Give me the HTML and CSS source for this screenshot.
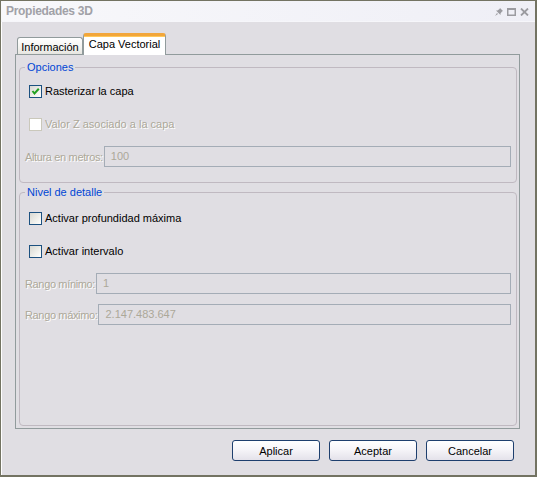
FILE: index.html
```html
<!DOCTYPE html>
<html lang="es">
<head>
<meta charset="utf-8">
<title>Propiedades 3D</title>
<link rel="stylesheet" href="styles.css">
</head>
<body>
<div class="window">
  <div class="titlebar">
    <span class="title">Propiedades 3D</span>
    <div class="title-icons">
      <svg class="ticon" width="8" height="8" viewBox="0 0 8 8"><path d="M5 0 L8 3 L7 3.5 L5.5 5.5 L5.5 7 L1 2.5 L2.5 2.5 L4.5 1 Z M2 5 L0 8 L3 6 Z" fill="#9b9ba0"/></svg>
      <svg class="ticon" width="9" height="8" viewBox="0 0 9 8"><rect x="0.75" y="0.75" width="7.5" height="6.5" fill="none" stroke="#9b9ba0" stroke-width="1.5"/><rect x="0" y="0" width="9" height="2" fill="#9b9ba0"/></svg>
      <svg class="ticon" width="9" height="8" viewBox="0 0 9 8"><path d="M1 0.5 L8 7.5 M8 0.5 L1 7.5" stroke="#9b9ba0" stroke-width="1.8"/></svg>
    </div>
  </div>
  <div class="content">
    <div class="tabs">
      <div class="tab">Información</div>
      <div class="tab tab-active">Capa Vectorial</div>
    </div>
    <div class="panel">
      <fieldset class="group group-options">
        <legend>Opciones</legend>
        <div class="check-row">
          <span class="checkbox">
            <svg width="11" height="11" viewBox="0 0 11 11"><path d="M2.5 5 L4.5 7.5 L8.8 2.8" fill="none" stroke="#21a121" stroke-width="2"/></svg>
          </span>
          <span class="check-text">Rasterizar la capa</span>
        </div>
        <div class="check-row row-gap-20 disabled">
          <span class="checkbox checkbox-disabled"></span>
          <span class="check-text">Valor Z asociado a la capa</span>
        </div>
        <div class="field-row row-gap-15">
          <span class="field-label">Altura en metros:</span>
          <span class="field-input">100</span>
        </div>
      </fieldset>
      <fieldset class="group group-detail">
        <legend>Nivel de detalle</legend>
        <div class="check-row">
          <span class="checkbox"></span>
          <span class="check-text">Activar profundidad máxima</span>
        </div>
        <div class="check-row row-gap-20">
          <span class="checkbox"></span>
          <span class="check-text">Activar intervalo</span>
        </div>
        <div class="field-row row-gap-15">
          <span class="field-label">Rango mínimo:</span>
          <span class="field-input">1</span>
        </div>
        <div class="field-row row-gap-10">
          <span class="field-label">Rango máximo:</span>
          <span class="field-input">2.147.483.647</span>
        </div>
      </fieldset>
    </div>
    <div class="footer">
      <button class="btn">Aplicar</button>
      <button class="btn">Aceptar</button>
      <button class="btn">Cancelar</button>
    </div>
  </div>
</div>
</body>
</html>
```
FILE: styles.css
```css
* { box-sizing: border-box; }
html, body { margin: 0; padding: 0; }
body {
  font-family: "Liberation Sans", Arial, sans-serif;
  font-size: 11px;
  color: #000;
  background: #e0dee3;
}
.window {
  width: 537px;
  height: 477px;
  display: flex;
  flex-direction: column;
  background: #e0dee3;
  border-style: solid;
  border-color: #737362;
  border-width: 1px 2px 2px 1px;
  box-shadow: inset 1px 0 #ffffff;
}
.titlebar {
  height: 21px;
  display: flex;
  align-items: center;
  justify-content: space-between;
  padding: 0 6px 0 5px;
  background: linear-gradient(to right, #f8f8fb, #efeff6);
  border-bottom: 1px solid #f6f6fa;
}
.title {
  font-weight: bold;
  font-size: 12px;
  color: #a1a1a7;
  letter-spacing: -0.3px;
}
.title-icons {
  display: flex;
  align-items: center;
  gap: 4px;
  padding-top: 1px;
}
.ticon { display: block; }
.content {
  flex: 1;
  display: flex;
  flex-direction: column;
  padding: 11px 15px 14px 14px;
}
.tabs {
  height: 21px;
  display: flex;
  align-items: flex-end;
  padding-left: 2px;
}
.tab {
  width: 66px;
  height: 17px;
  border: 1px solid #919b9c;
  border-bottom: none;
  border-radius: 3px 3px 0 0;
  background: linear-gradient(to bottom, #ffffff, #f3f3f0 60%, #e6e5e0);
  display: flex;
  align-items: center;
  justify-content: center;
  padding-top: 1px;
}
.tab-active {
  width: 83px;
  height: 22px;
  margin-bottom: -1px;
  position: relative;
  z-index: 1;
  background: #ffffff;
  border-top: 3px solid #f2a63a;
  box-shadow: inset 0 1px 0 #ffc85a;
  padding-top: 0;
  padding-bottom: 3px;
}
.panel {
  flex: 1;
  display: flex;
  flex-direction: column;
  border: 1px solid #919b9c;
  padding: 6px 2px 2px 3px;
  background: #e0dee3;
}
.group {
  margin: 0;
  padding: 11px 5px 15px 5px;
  border: 1px solid #c0b9c1;
  border-radius: 4px;
  display: flex;
  flex-direction: column;
  min-width: 0;
}
.group legend {
  padding: 0 2px;
  margin: 0;
  height: 13px;
  line-height: 13px;
  color: #0046d5;
}
.group-detail {
  margin-top: 3px;
  padding-top: 13px;
  flex: 1;
}
.check-row {
  display: flex;
  align-items: center;
  height: 13px;
  margin-left: 4px;
  line-height: 13px;
}
.row-gap-20 { margin-top: 20px; }
.row-gap-15 { margin-top: 15px; }
.row-gap-10 { margin-top: 10px; }
.checkbox {
  width: 13px;
  height: 13px;
  border: 1px solid #1c5180;
  background: linear-gradient(135deg, #d8d8d2, #f4f4f0 70%, #ffffff);
  display: block;
  flex: none;
}
.checkbox svg { display: block; }
.checkbox-disabled {
  border-color: #cac8bb;
  background: #ffffff;
}
.check-text { margin-left: 3px; }
.disabled .check-text,
.field-label {
  color: #aca899;
  text-shadow: 1px 1px 0 #ffffff;
}
.field-row {
  display: flex;
  align-items: center;
  gap: 1px;
}
.field-label {
  white-space: nowrap;
  letter-spacing: -0.35px;
}
.field-input {
  flex: 1;
  height: 21px;
  border: 1px solid #a4acb6;
  padding-left: 6px;
  line-height: 19px;
  color: #aca899;
}
.footer {
  display: flex;
  justify-content: flex-end;
  gap: 9px;
  padding: 11px 6px 0 0;
}
.btn {
  width: 88px;
  height: 21px;
  border: 1px solid #1e3f6e;
  border-radius: 3px;
  background: linear-gradient(to bottom, #ffffff 0%, #f6f5f9 45%, #e4e2ea 100%);
  font-family: "Liberation Sans", Arial, sans-serif;
  font-size: 11px;
  color: #000;
  padding: 0;
}
```
